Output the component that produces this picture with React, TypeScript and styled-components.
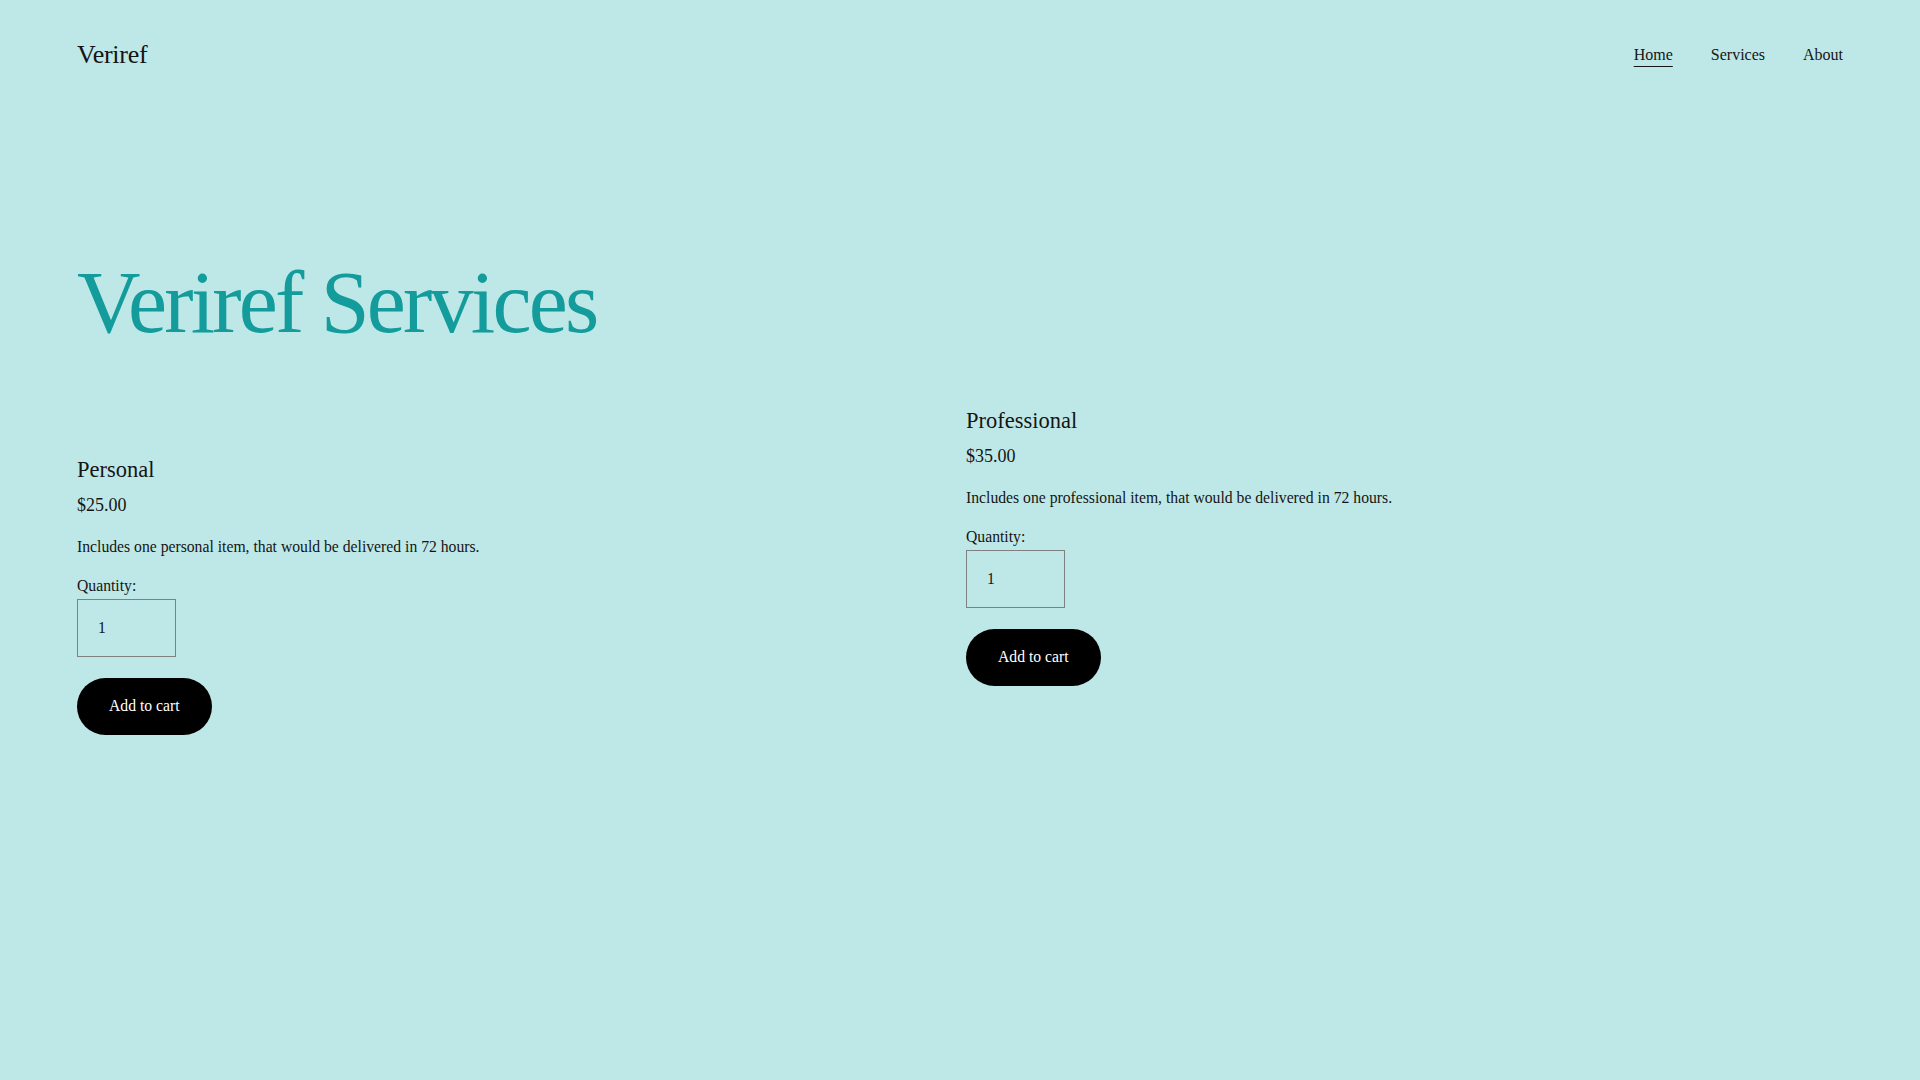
import React from 'react';
import styled, {createGlobalStyle} from "styled-components";

const GlobalStyle = createGlobalStyle`
  html, body {
    margin: 0;
    padding: 0;
  }

  body {
    background-color: #bee8e7;
    color: #151515;
    font-family: "Liberation Serif", "Times New Roman", serif;
  }

  * {
    box-sizing: border-box;
  }
`

type Product = {
    title: string
    price: string
    description: string
    offset: number
}

const products: Product[] = [
    {
        title: 'Personal',
        price: '$25.00',
        description: 'Includes one personal item, that would be delivered in 72 hours.',
        offset: 49,
    },
    {
        title: 'Professional',
        price: '$35.00',
        description: 'Includes one professional item, that would be delivered in 72 hours.',
        offset: 0,
    },
]

const ProductCard = ({product}: { product: Product }) => {
    return (
        <Card offset={product.offset}>
            <CardTitle>{product.title}</CardTitle>
            <Price>{product.price}</Price>
            <Description>{product.description}</Description>
            <QtyLabel htmlFor={`qty-${product.title}`}>Quantity:</QtyLabel>
            <QtyInput id={`qty-${product.title}`} type="text" defaultValue="1"/>
            <CartButton>Add to cart</CartButton>
        </Card>
    )
}

export default function App() {
    return (
        <Page>
            <GlobalStyle/>
            <Header>
                <Logo>Veriref</Logo>
                <Nav>
                    <NavLink href="#" active>Home</NavLink>
                    <NavLink href="#">Services</NavLink>
                    <NavLink href="#">About</NavLink>
                </Nav>
            </Header>
            <Main>
                <MainTitle>Veriref Services</MainTitle>
                <Products>
                    {products.map(p => <ProductCard key={p.title} product={p}/>)}
                </Products>
            </Main>
        </Page>
    );
}

const Page = styled.div`
  min-height: 100vh;
  background-color: #bee8e7;
`

const Header = styled.header`
  display: flex;
  align-items: center;
  justify-content: space-between;
  height: 110px;
  padding: 0 77px;
`

const Logo = styled.div`
  font-size: 26px;
  line-height: 1.2;
  letter-spacing: -0.01em;
  color: #151515;
`

const Nav = styled.nav`
  display: flex;
  align-items: center;
  gap: 38px;
`

const NavLink = styled.a<{ active?: boolean }>`
  font-size: 16px;
  line-height: 1.2;
  color: #151515;
  text-decoration: ${p => p.active ? 'underline' : 'none'};
  text-decoration-thickness: 1px;
  text-underline-offset: 6px;
`

const Main = styled.main`
  padding: 0 77px;
`

const MainTitle = styled.h1`
  margin: 140px 0 51px;
  font-size: 88px;
  font-weight: 400;
  line-height: 1.2;
  letter-spacing: -0.032em;
  color: #139c9b;
`

const Products = styled.div`
  display: grid;
  grid-template-columns: 1fr 1fr;
  column-gap: 12px;
  align-items: start;
`

const Card = styled.div<{ offset: number }>`
  display: flex;
  flex-direction: column;
  align-items: flex-start;
  margin-top: ${p => p.offset}px;
`

const CardTitle = styled.h2`
  margin: 0 0 12px;
  font-size: 22.5px;
  font-weight: 400;
  line-height: 1.2;
`

const Price = styled.div`
  margin-bottom: 22px;
  font-size: 18px;
  line-height: 1.2;
`

const Description = styled.p`
  margin: 0 0 20px;
  font-size: 15.7px;
  line-height: 1.2;
`

const QtyLabel = styled.label`
  margin-bottom: 3px;
  font-size: 15.7px;
  line-height: 1.2;
`

const QtyInput = styled.input`
  width: 99px;
  height: 58px;
  margin: 0 0 21px;
  padding: 0 0 0 20px;
  border: 1px solid #808080;
  border-radius: 0;
  background: transparent;
  color: #151515;
  font-family: "Liberation Serif", "Times New Roman", serif;
  font-size: 15.7px;
  outline: none;
`

const CartButton = styled.button`
  height: 57px;
  padding: 0 32px;
  border: none;
  border-radius: 999px;
  background-color: #000;
  color: #fff;
  font-family: "Liberation Serif", "Times New Roman", serif;
  font-size: 15.7px;
  cursor: pointer;
`
